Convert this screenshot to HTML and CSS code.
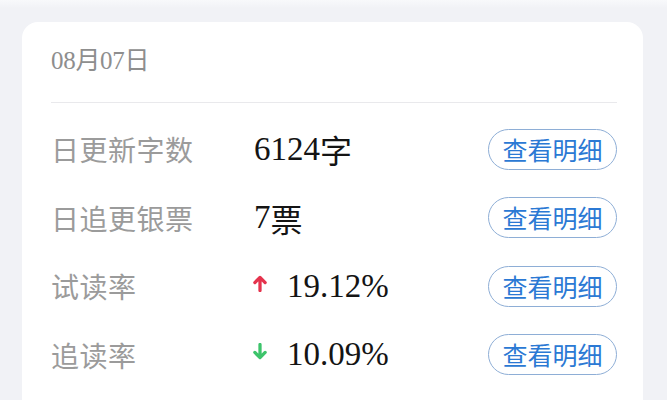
FILE: index.html
```html
<!DOCTYPE html>
<html lang="zh-CN">
<head>
<meta charset="utf-8">
<title>每日数据</title>
<link rel="stylesheet" href="styles.css">
</head>
<body>
<div class="page">
  <section class="card">
    <div class="date">08月07日</div>
    <div class="divider"></div>
    <ul class="rows">
      <li class="row">
        <span class="label">日更新字数</span>
        <span class="value">6124<span class="cjk">字</span></span>
        <button class="detail">查看明细</button>
      </li>
      <li class="row">
        <span class="label">日追更银票</span>
        <span class="value">7<span class="cjk">票</span></span>
        <button class="detail">查看明细</button>
      </li>
      <li class="row">
        <span class="label">试读率</span>
        <span class="value"><span class="trend up"><svg viewBox="0 0 12 14" width="14" height="17"><path d="M6 13V2M1.6 6.2L6 1.8l4.4 4.4"/></svg></span>19.12%</span>
        <button class="detail">查看明细</button>
      </li>
      <li class="row">
        <span class="label">追读率</span>
        <span class="value"><span class="trend down"><svg viewBox="0 0 12 14" width="14" height="17"><path d="M6 1v11M1.6 7.8L6 12.2l4.4-4.4"/></svg></span>10.09%</span>
        <button class="detail">查看明细</button>
      </li>
    </ul>
  </section>
</div>
</body>
</html>
```

FILE: styles.css
```css
html, body {
  margin: 0;
  padding: 0;
}
body {
  background: linear-gradient(#f8f9fb 0, #f1f2f6 8px, #f1f2f6 100%);
  height: 400px;
  overflow: hidden;
  font-family: "Noto Sans CJK SC", "Noto Sans", sans-serif;
}
.page {
  padding: 22px 24px 0 22px;
}
.card {
  background: #ffffff;
  border-radius: 16px 16px 0 0;
  padding: 22px 26px 0 29px;
  height: 378px;
  box-sizing: border-box;
}
.date {
  font-family: "Liberation Serif", "Noto Sans CJK SC", serif;
  font-size: 25px;
  line-height: 34px;
  color: #8e8e8e;
  height: 34px;
  letter-spacing: -0.3px;
}
.divider {
  margin-top: 24px;
  height: 1px;
  background: #e9e9ec;
}
.rows {
  list-style: none;
  margin: 0;
  padding: 12px 0 0;
}
.row {
  display: grid;
  grid-template-columns: 203px 1fr auto;
  align-items: center;
  height: 68.5px;
}
.label {
  font-size: 28px;
  color: #9b9b9b;
  letter-spacing: 0.5px;
  line-height: 1;
}
.value {
  display: flex;
  align-items: center;
  font-family: "Liberation Serif", "Noto Sans CJK SC", serif;
  font-size: 33px;
  color: #141414;
  line-height: 1;
}
.cjk {
  font-family: "Noto Sans CJK SC", sans-serif;
  font-size: 32px;
}
.trend {
  display: inline-flex;
  width: 33px;
  margin-left: -1px;
  margin-right: 1px;
  margin-top: -6px;
}
.trend svg {
  fill: none;
  stroke-width: 2.8;
  stroke-linecap: round;
  stroke-linejoin: round;
}
.trend.up svg {
  stroke: #e5334d;
}
.trend.down svg {
  stroke: #3dc46b;
}
.detail {
  width: 129px;
  height: 41px;
  box-sizing: border-box;
  border: 1px solid #8eaed6;
  border-radius: 21px;
  background: #ffffff;
  color: #2b79d4;
  font-family: "Noto Sans CJK SC", sans-serif;
  font-size: 25px;
  line-height: 1;
  padding: 0;
}
```
